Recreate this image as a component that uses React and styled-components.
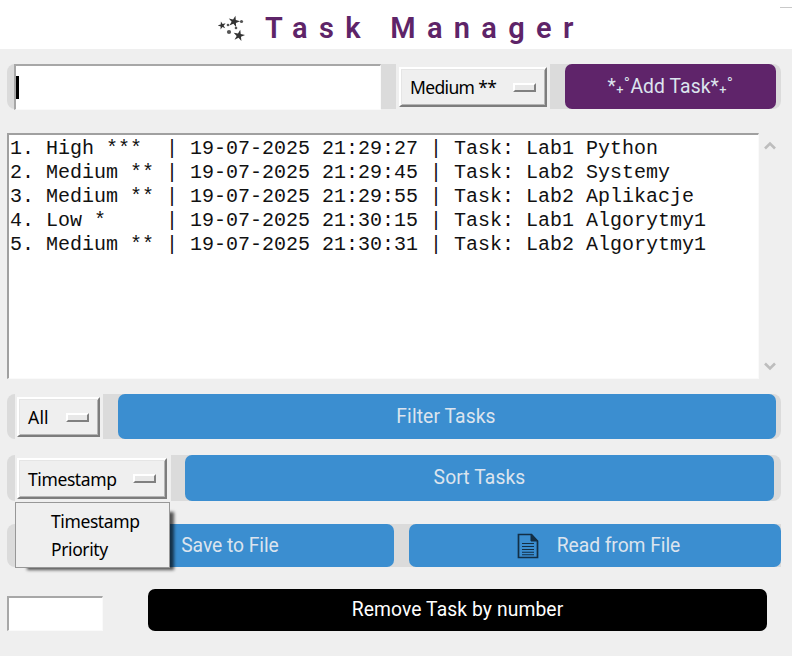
import React from 'react';
import styled, { createGlobalStyle } from 'styled-components';

const GlobalStyle = createGlobalStyle`
  * { box-sizing: border-box; }
  body { margin: 0; background: #efefef; }
`;

const Window = styled.main`
  position: relative;
  display: flex;
  flex-direction: column;
  width: 792px;
  height: 656px;
  overflow: hidden;
  background: #efefef;
`;

const Header = styled.header`
  display: flex;
  align-items: flex-start;
  height: 49px;
  padding: 10px 0 0 218px;
  background: #fff;
`;

const TitleRule = styled.span`
  position: absolute;
  top: 7px;
  right: 0;
  width: 12px;
  height: 1px;
  background: #c9c9c9;
`;

const Title = styled.h1`
  margin: 0 0 0 19px;
  font: 600 29px/36px Roboto, sans-serif;
  letter-spacing: ${(p) => p.$tracking}px;
  color: #5e2468;
  white-space: pre;
`;

const Sparkles = styled.svg`
  margin-top: 4px;
  width: 28px;
  height: 28px;
  flex: none;
`;

const Content = styled.div`
  display: flex;
  flex-direction: column;
  padding: 15px 11px 0 7px;
`;

const Row = styled.div`
  display: flex;
  align-items: stretch;
  height: ${(p) => p.$height}px;
  margin-bottom: ${(p) => p.$gap}px;
  padding-left: ${(p) => p.$inset ?? 8}px;
  border-radius: ${(p) => (p.$square ? '8px 0 0 8px' : '8px')};
  background: ${(p) => (p.$plain ? 'transparent' : '#dbdbdb')};
`;

const Entry = styled.div`
  display: flex;
  align-items: center;
  width: ${(p) => p.$width}px;
  height: ${(p) => p.$height}px;
  margin: ${(p) => p.$margin || '0'};
  border: solid;
  border-width: 2px 1px 1px 2px;
  border-color: #a7a7a7 #fafafa #fafafa #a7a7a7;
  background: #fff;
`;

const Caret = styled.span`
  width: 3px;
  height: 23px;
  background: #000;
`;

const MenuSlot = styled.div`
  display: flex;
  width: ${(p) => p.$width}px;
  margin-right: ${(p) => p.$gap ?? 15}px;
  padding: 3px ${(p) => p.$right ?? 3}px 2px ${(p) => p.$left ?? 2}px;
  background: #efefef;
`;

const MenuButton = styled.button`
  display: flex;
  align-items: center;
  justify-content: space-between;
  flex: 1;
  padding: 0 9px 0 9px;
  border: solid;
  border-width: 2px;
  border-color: #fff #7d7d7d #7d7d7d #fff;
  background: #efefef;
  box-shadow: inset 1px 1px #e5e5e5, inset -1px -1px #b5b5b5;
  font: 17.5px/24px "Noto Sans", sans-serif;
  letter-spacing: ${(p) => p.$tracking ?? -0.4}px;
  color: #000;
  white-space: nowrap;
`;

const Indicator = styled.span`
  width: 23px;
  height: 9px;
  border: 2px solid;
  border-color: #fff #808080 #808080 #fff;
  background: #e8e8e8;
`;

const Action = styled.button`
  display: flex;
  align-items: center;
  justify-content: center;
  width: ${(p) => p.$width}px;
  padding: ${(p) => p.$drop ?? 1}px ${(p) => p.$pull || 0}px 0 ${(p) => p.$shift || 0}px;
  margin-left: ${(p) => p.$left || 0}px;
  border: 0;
  border-radius: 7px;
  background: ${(p) => p.$color || '#3b8ed0'};
  color: ${(p) => p.$ink || '#dce4ee'};
  font: 19.3px/24px Roboto, sans-serif;
  letter-spacing: ${(p) => p.$tracking ?? 0.1}px;
  white-space: pre;
`;

const LowPlus = styled.span`
  display: inline-block;
  line-height: 10px;
  vertical-align: 3px;
`;

const FileIcon = styled.svg`
  width: 22px;
  height: 26px;
  margin: 0 18px 0 0;
  flex: none;
`;

const ListArea = styled.section`
  display: flex;
  height: 246px;
  margin-bottom: 15px;
`;

const List = styled.div`
  width: 752px;
  padding: 2px 0 0 1px;
  border: solid;
  border-width: 2px 1px 1px 2px;
  border-color: #a0a0a0 #fafafa #fafafa #a0a0a0;
  background: #fff;
`;

const Task = styled.div`
  height: 24px;
  font: 20px/24px "Liberation Mono", monospace;
  color: #111;
  white-space: pre;
`;

const Scrollbar = styled.div`
  display: flex;
  flex-direction: column;
  justify-content: space-between;
  padding: 8px 0 8px 5px;
`;

const Arrow = styled.svg`
  width: 12px;
  height: 10px;
  transform: ${(p) => (p.$down ? 'rotate(180deg)' : 'none')};
`;

const Popup = styled.div`
  position: absolute;
  top: 502px;
  left: 15px;
  width: 155px;
  height: 66px;
  padding: 4px 0 0 35px;
  border: 1px solid #979797;
  background: #efefef;
  box-shadow: 8px 6px 3px -4px rgba(0, 0, 0, 0.65);
`;

const Option = styled.div`
  height: 28px;
  font: 17.5px/28px "Noto Sans", sans-serif;
  letter-spacing: -0.4px;
  color: #000;
`;

const tasks = [
  '1. High ***  | 19-07-2025 21:29:27 | Task: Lab1 Python',
  '2. Medium ** | 19-07-2025 21:29:45 | Task: Lab2 Systemy',
  '3. Medium ** | 19-07-2025 21:29:55 | Task: Lab2 Aplikacje',
  '4. Low *     | 19-07-2025 21:30:15 | Task: Lab1 Algorytmy1',
  '5. Medium ** | 19-07-2025 21:30:31 | Task: Lab2 Algorytmy1',
];

const star = 'M0-6 L1.4-1.8 5.8-1.7 2.2.9 3.5 5 0 2.4-3.5 5-2.2.9-5.8-1.7-1.4-1.8Z';

const StarCluster = () => (
  <Sparkles viewBox="0 0 28 28" fill="#333">
    <path d={star} transform="translate(16 7.5) rotate(14)" />
    <path d={star} transform="translate(21 21.5) rotate(12)" />
    <path d={star} transform="translate(4 11.5) rotate(-15) scale(.7)" />
    <g fill="#555">
      <circle cx="23.5" cy="7.5" r="1.6" />
      <circle cx="10" cy="11" r="1.3" />
      <circle cx="18" cy="14" r="1.3" />
      <circle cx="11" cy="18" r="2.1" />
    </g>
  </Sparkles>
);

const Document = () => (
  <FileIcon viewBox="0 0 22 26" fill="none" stroke="#132f45">
    <path d="M1.5 1.5H14.5L20.5 8V24.5H1.5Z" strokeWidth="1.7" />
    <path d="M14 1.5V8H20.5Z" fill="#132f45" strokeWidth="1" />
    <path d="M5 10.5H17M5 13.5H17M5 16.5H17M5 19.2H17M5 21.8H17" strokeWidth="1.1" />
  </FileIcon>
);

const ScrollArrow = ({ down }) => (
  <Arrow $down={down} viewBox="0 0 12 10">
    <path d="M1 7.5 6 2.5 11 7.5" fill="none" stroke="#bdbdbd" strokeWidth="2.6" />
  </Arrow>
);

export default function App() {
  return (
    <Window>
      <GlobalStyle />
      <Header>
        <StarCluster />
        <Title $tracking={11.3}>Task Manager</Title>
        <TitleRule />
      </Header>
      <Content>
        <Row $height={45} $gap={24} $inset={7}>
          <Entry $width={367} $height={46} $margin="0 15px 0 0"><Caret /></Entry>
          <MenuSlot $width={154} $left={3}>
            <MenuButton $tracking={-0.65}>Medium **<Indicator /></MenuButton>
          </MenuSlot>
          <Action $width={211} $color="#5f246a">
            <span>*<LowPlus>₊</LowPlus>˚Add Task*<LowPlus>₊</LowPlus>˚</span>
          </Action>
        </Row>
        <ListArea>
          <List>
            {tasks.map((task) => <Task key={task}>{task}</Task>)}
          </List>
          <Scrollbar>
            <ScrollArrow />
            <ScrollArrow down />
          </Scrollbar>
        </ListArea>
        <Row $height={45} $gap={16}>
          <MenuSlot $width={88}>
            <MenuButton $tracking={0.2}>All<Indicator /></MenuButton>
          </MenuSlot>
          <Action $width={658} $pull={2}>Filter Tasks</Action>
        </Row>
        <Row $height={46} $gap={23}>
          <MenuSlot $width={156} $gap={14} $right={4}>
            <MenuButton>Timestamp<Indicator /></MenuButton>
          </MenuSlot>
          <Action $width={589} $drop={0}>Sort Tasks</Action>
        </Row>
        <Row $height={43} $gap={22} $inset={15} $square>
          <Action $width={372} $shift={4} $tracking={-0.05}><Document />Save to File</Action>
          <Action $width={372} $left={15} $shift={7} $tracking={-0.05}><Document />Read from File</Action>
        </Row>
        <Row $height={42} $gap={0} $inset={0} $plain>
          <Entry $width={96} $height={35} $margin="7px 45px 0 0" />
          <Action $width={619} $drop={0} $color="#000" $ink="#fff">Remove Task by number</Action>
        </Row>
      </Content>
      <Popup>
        <Option>Timestamp</Option>
        <Option>Priority</Option>
      </Popup>
    </Window>
  );
}
